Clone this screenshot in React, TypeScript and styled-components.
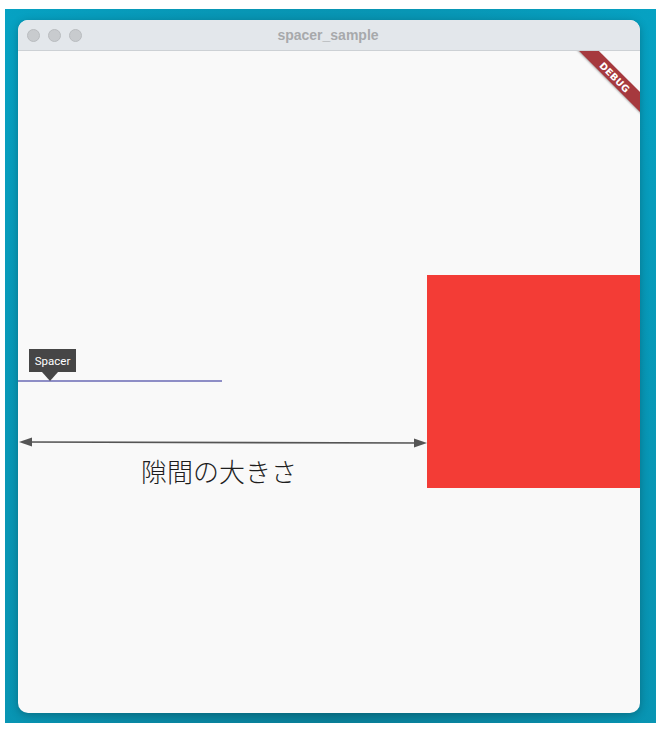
import React from "react";
import styled, { createGlobalStyle } from "styled-components";

const Global = createGlobalStyle`
  html, body { margin: 0; padding: 0; background: #ffffff; }
  body { font-family: "Liberation Sans", Arial, sans-serif; }
`;

const Page = styled.div`
  width: 662px;
  height: 729px;
  padding: 9px 6px 6px 5px;
  box-sizing: border-box;
  background: #ffffff;
`;

const Backdrop = styled.div`
  height: 714px;
  padding: 11px 16px 10px 13px;
  box-sizing: border-box;
  background: radial-gradient(ellipse at 50% 100%, #0a7f98 0%, #0a8aa6 45%, #06a2c3 100%);
`;

const Window = styled.div`
  height: 693px;
  border-radius: 10px;
  overflow: hidden;
  display: flex;
  flex-direction: column;
  background: #f9f9f9;
  box-shadow: 0 2px 8px rgba(0, 0, 0, 0.25);
`;

const TitleBar = styled.div`
  height: 30px;
  flex: none;
  display: grid;
  grid-template-columns: 1fr auto 1fr;
  align-items: center;
  background: #e3e7eb;
  border-bottom: 1px solid #cdd1d5;
`;

const Lights = styled.div`
  display: flex;
  gap: 8px;
  padding-left: 9px;
`;

const Light = styled.span`
  width: 13px;
  height: 13px;
  border-radius: 50%;
  background: #c8cbce;
  border: 0.5px solid #b9bcbf;
  box-sizing: border-box;
`;

const Title = styled.div`
  font-size: 14px;
  font-weight: 700;
  color: #a7a9ab;
  transform: translateX(-1px);
`;

const Content = styled.div`
  position: relative;
  flex: 1;
  display: flex;
  align-items: center;
  overflow: hidden;
`;

const Spacer = styled.div`
  flex: 1;
`;

const RedBox = styled.div`
  width: 213px;
  height: 213px;
  margin-bottom: 2px;
  background: #f33c36;
  flex: none;
`;

const Banner = styled.div`
  position: absolute;
  left: 537px;
  top: 19px;
  width: 120px;
  height: 14px;
  background: #a6393e;
  transform: rotate(45deg);
  display: flex;
  align-items: center;
  justify-content: center;
  color: #ffffff;
  font-family: "DejaVu Sans", sans-serif;
  font-weight: 700;
  font-size: 9.5px;
  letter-spacing: 0.2px;
  box-shadow: 0 1px 2px rgba(0, 0, 0, 0.3);
`;

const GuideLine = styled.div`
  position: absolute;
  left: 0;
  top: 329px;
  width: 204px;
  height: 2px;
  background: #8e8ec6;
`;

const Tooltip = styled.div`
  position: absolute;
  left: 11px;
  top: 298px;
  width: 47px;
  height: 23px;
  background: #464646;
  color: #ffffff;
  font-family: Roboto, "Liberation Sans", sans-serif;
  font-size: 11.5px;
  display: flex;
  align-items: center;
  justify-content: center;
  &::after {
    content: "";
    position: absolute;
    left: 13px;
    top: 23px;
    border-left: 8px solid transparent;
    border-right: 8px solid transparent;
    border-top: 9px solid #464646;
  }
`;

const Measure = styled.svg`
  position: absolute;
  left: 0;
  top: 382px;
`;

const Label = styled.div`
  position: absolute;
  left: 123px;
  top: 402px;
  font-family: "Noto Sans CJK JP", sans-serif;
  font-weight: 300;
  font-size: 26px;
  line-height: 36px;
  color: #1e1e1e;
`;

export default function App() {
  return (
    <>
      <Global />
      <Page>
        <Backdrop>
          <Window>
            <TitleBar>
              <Lights>
                <Light />
                <Light />
                <Light />
              </Lights>
              <Title>spacer_sample</Title>
              <div />
            </TitleBar>
            <Content>
              <Spacer />
              <RedBox />
              <GuideLine />
              <Tooltip>Spacer</Tooltip>
              <Measure width="412" height="20" viewBox="0 0 412 20">
                <line x1="6" y1="9" x2="404" y2="10" stroke="#555555" strokeWidth="1.6" />
                <polygon points="1,9 14,4.5 14,13.5" fill="#555555" />
                <polygon points="409,10 396,5.5 396,14.5" fill="#555555" />
              </Measure>
              <Label>隙間の大きさ</Label>
              <Banner>DEBUG</Banner>
            </Content>
          </Window>
        </Backdrop>
      </Page>
    </>
  );
}
